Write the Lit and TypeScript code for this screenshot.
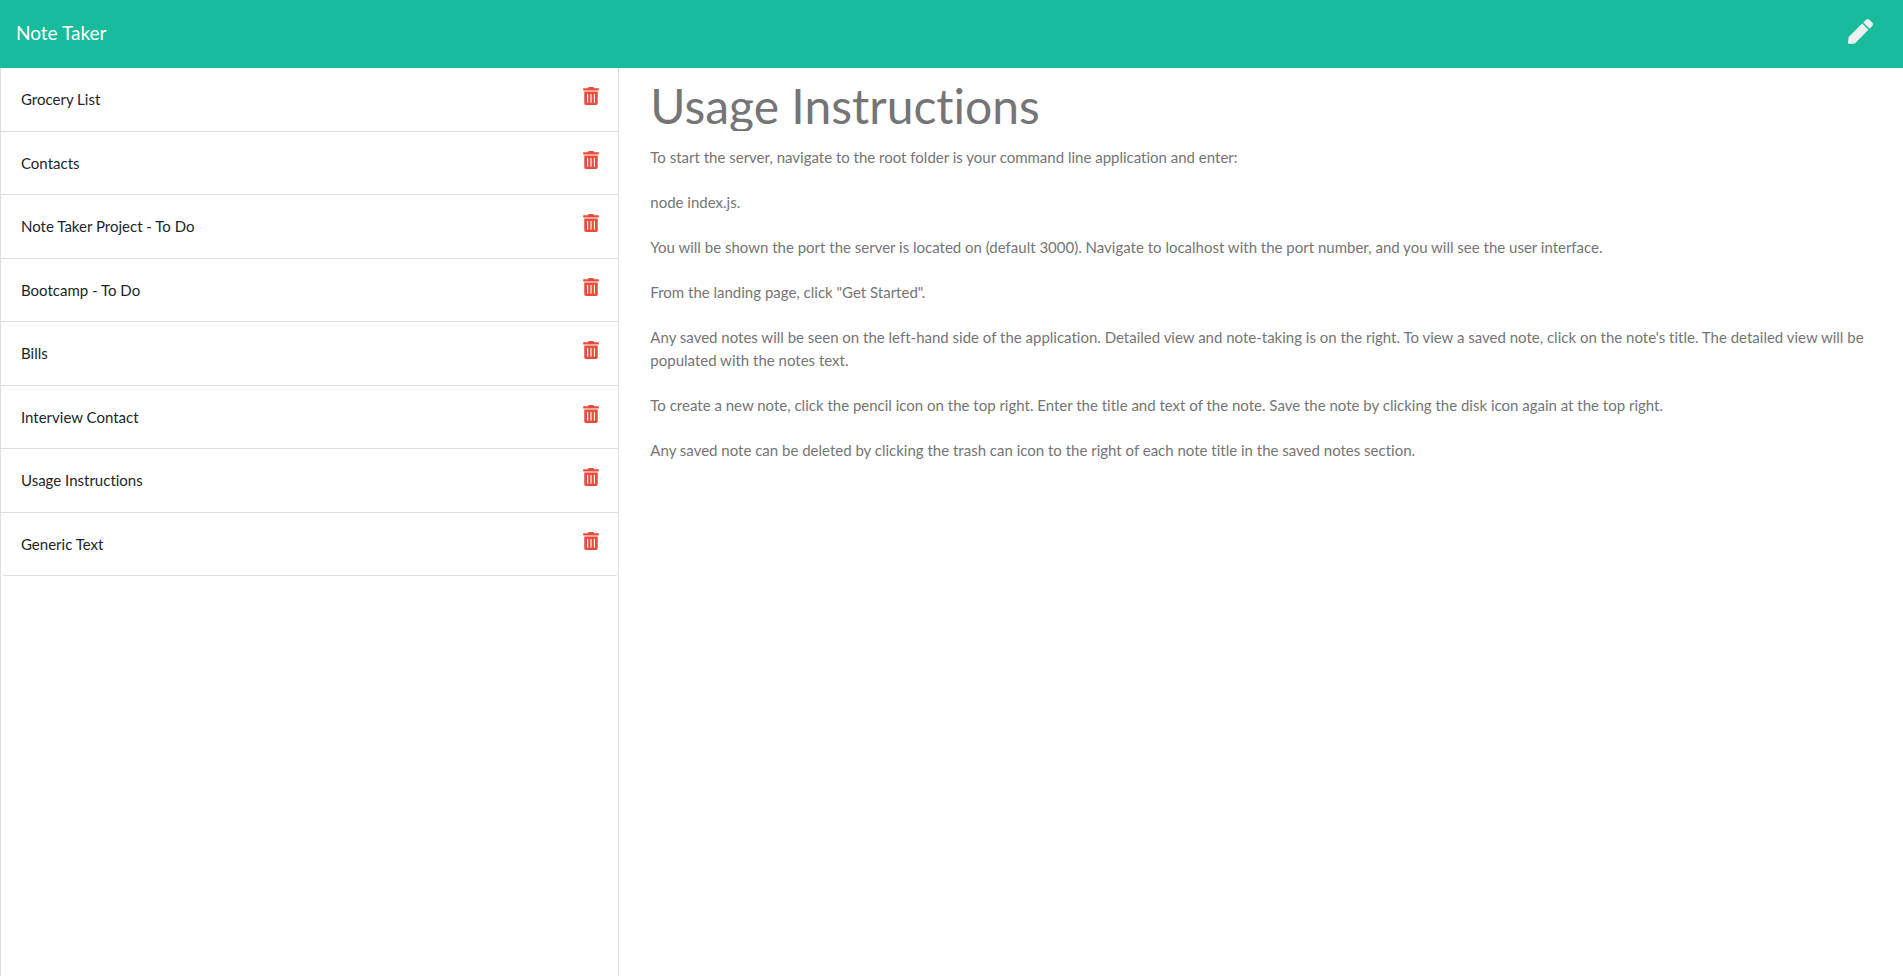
import { LitElement, html, css, svg } from "lit";
import { customElement, state } from "lit/decorators.js";

interface Note {
  title: string;
  text: string;
}

const INSTRUCTIONS = [
  "To start the server, navigate to the root folder is your command line application and enter:",
  "node index.js.",
  "You will be shown the port the server is located on (default 3000). Navigate to localhost with the port number, and you will see the user interface.",
  'From the landing page, click "Get Started".',
  "Any saved notes will be seen on the left-hand side of the application. Detailed view and note-taking is on the right. To view a saved note, click on the note's title. The detailed view will be populated with the notes text.",
  "To create a new note, click the pencil icon on the top right. Enter the title and text of the note. Save the note by clicking the disk icon again at the top right.",
  "Any saved note can be deleted by clicking the trash can icon to the right of each note title in the saved notes section.",
].join("\n\n");

const trashIcon = svg`<path d="M32 464a48 48 0 0 0 48 48h288a48 48 0 0 0 48-48V128H32zm272-256a16 16 0 0 1 32 0v224a16 16 0 0 1-32 0zm-96 0a16 16 0 0 1 32 0v224a16 16 0 0 1-32 0zm-96 0a16 16 0 0 1 32 0v224a16 16 0 0 1-32 0zM432 32H312l-9.4-18.7A24 24 0 0 0 281.1 0H166.8a23.72 23.72 0 0 0-21.4 13.3L136 32H16A16 16 0 0 0 0 48v32a16 16 0 0 0 16 16h416a16 16 0 0 0 16-16V48a16 16 0 0 0-16-16z"/>`;
const penIcon = svg`<path d="M290.74 93.24l128.02 128.02-277.99 277.99-114.14 12.6C11.35 513.54-1.56 500.62.14 485.34l12.7-114.22 277.9-277.88zm207.2-19.06l-60.11-60.11c-18.75-18.75-49.16-18.75-67.91 0l-56.55 56.55 128.02 128.02 56.55-56.55c18.75-18.76 18.75-49.16 0-67.91z"/>`;

@customElement("app-root")
export class AppRoot extends LitElement {
  @state() private notes: Note[] = [
    "Grocery List",
    "Contacts",
    "Note Taker Project - To Do",
    "Bootcamp - To Do",
    "Bills",
    "Interview Contact",
    "Usage Instructions",
    "Generic Text",
  ].map((title) => ({ title, text: title === "Usage Instructions" ? INSTRUCTIONS : "" }));

  @state() private active: Note = this.notes[6];

  static styles = css`
    :host {
      display: flex;
      flex-direction: column;
      min-height: 100vh;
      background: #fff;
      color: #212529;
      font-family: Lato, "Open Sans", sans-serif;
      font-size: 15px;
      font-variant-ligatures: none;
      line-height: 1.5;
    }
    :host,
    * {
      box-sizing: border-box;
    }
    button,
    input,
    textarea {
      margin: 0;
      padding: 0;
      border: 0;
      background: none;
      color: inherit;
      font: inherit;
      font-variant-ligatures: none;
      outline: none;
    }
    button {
      cursor: pointer;
    }
    svg {
      display: block;
      fill: currentColor;
    }
    .navbar {
      display: flex;
      align-items: center;
      justify-content: space-between;
      height: 68px;
      padding: 0 30px 6px 16px;
      background: #18bc9c;
      color: #fff;
    }
    .brand {
      padding-top: 4px;
      color: inherit;
      font-size: 19px;
      text-decoration: none;
    }
    .new-note {
      color: #ecf0f1;
    }
    .main {
      flex: 1;
      display: grid;
      grid-template-columns: minmax(0, 1fr) minmax(0, 2fr);
      padding-bottom: 2px;
    }
    .sidebar {
      margin-right: 15px;
      border: solid #dfdfdf;
      border-width: 0 1px;
    }
    .list {
      margin: 0;
      padding: 0;
      list-style: none;
    }
    .item {
      display: flex;
      align-items: center;
      justify-content: space-between;
      padding: 20px 19px 20px 20px;
      border-bottom: 1px solid #dfdfdf;
    }
    .item:last-child {
      border-radius: 0 0 4px 4px;
    }
    .delete {
      color: #e74c3c;
      margin: -6px 0 0;
    }
    .editor {
      display: flex;
      flex-direction: column;
      padding: 12px 15px 0 16px;
      color: #757575;
    }
    .title {
      width: 100%;
      height: 51px;
      font-size: 48px;
      line-height: 51px;
    }
    .text {
      flex: 1;
      width: 100%;
      margin-top: 15px;
      resize: none;
    }
  `;

  private remove(note: Note) {
    this.notes = this.notes.filter((n) => n !== note);
  }

  render() {
    return html`
      <nav class="navbar">
        <a class="brand" href="#">Note Taker</a>
        <button
          class="new-note"
          aria-label="New note"
          @click=${() => (this.active = { title: "", text: "" })}
        >
          <svg width="25" height="25" viewBox="0 0 512 512">${penIcon}</svg>
        </button>
      </nav>
      <main class="main">
        <aside class="sidebar">
          <ul class="list">
            ${this.notes.map(
              (note) => html`<li class="item">
                <button class="open" @click=${() => (this.active = note)}>${note.title}</button>
                <button
                  class="delete"
                  aria-label=${`Delete ${note.title}`}
                  @click=${() => this.remove(note)}
                >
                  <svg width="16" height="18" viewBox="0 0 448 512">${trashIcon}</svg>
                </button>
              </li>`
            )}
          </ul>
        </aside>
        <section class="editor">
          <input
            class="title"
            type="text"
            aria-label="Note title"
            placeholder="Note Title"
            .value=${this.active.title}
          />
          <textarea
            class="text"
            aria-label="Note text"
            placeholder="Note Text"
            .value=${this.active.text}
          ></textarea>
        </section>
      </main>
    `;
  }
}
